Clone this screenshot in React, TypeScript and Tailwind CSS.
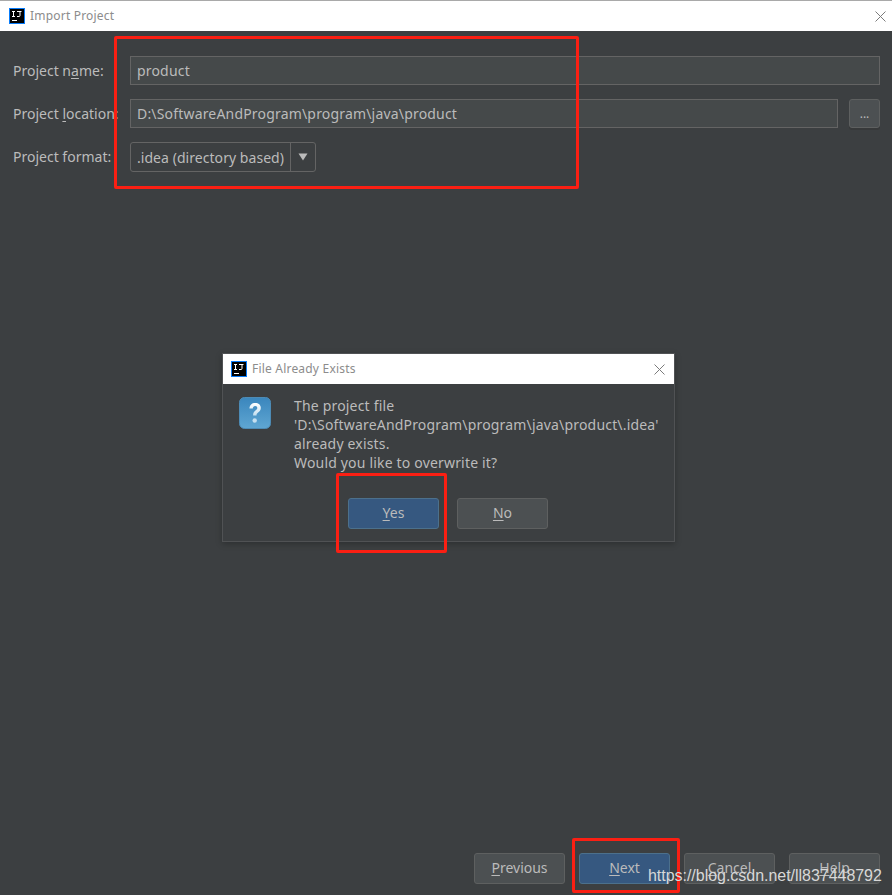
import React from 'react';

const uiFont = "font-['Noto_Sans','Open_Sans',sans-serif]";

const IdeaLogo = ({ size = 16 }: { size?: number }) => (
  <svg width={size} height={size} viewBox="0 0 16 16" className="shrink-0">
    <rect x="0" y="0" width="16" height="16" fill="#087cfa" />
    <rect x="1" y="1" width="14" height="14" fill="#000" />
    <path d="M3 3.500h3M4.500 3.500v5M3 8.500h3M8 3.500h4.500M11 3.500v4q0 1-1 1H8M3 12.500h5" stroke="#fff" strokeWidth="1" fill="none" />
  </svg>
);

const CloseIcon = () => (
  <svg width="11" height="11" viewBox="0 0 11 11" className="shrink-0">
    <path d="M0.500 0.500l10 10M10.500 0.500l-10 10" stroke="#7b7b7b" strokeWidth="1" />
  </svg>
);

const QuestionIcon = () => (
  <svg width="32" height="32" viewBox="0 0 32 32" className="shrink-0">
    <defs>
      <linearGradient id="qbg" x1="0" y1="0" x2="0" y2="1">
        <stop offset="0" stopColor="#3a86bd" />
        <stop offset="1" stopColor="#5fa6d2" />
      </linearGradient>
      <linearGradient id="qmark" x1="0" y1="0" x2="0" y2="1">
        <stop offset="0" stopColor="#ffffff" />
        <stop offset="1" stopColor="#c4dff0" />
      </linearGradient>
    </defs>
    <rect x="0.500" y="0.500" width="31" height="31" rx="5" fill="url(#qbg)" stroke="#4d8bb5" />
    <path d="M10.500 11.500c0-3.500 2.500-5.500 5.700-5.500 3.300 0 5.600 2 5.600 4.900 0 2.300-1.300 3.400-2.700 4.500-1.100.9-1.600 1.500-1.600 3.100h-3.400c0-2.600.8-3.700 2.300-4.900 1.100-.9 1.900-1.500 1.900-2.600 0-1.100-.8-1.900-2.100-1.900-1.400 0-2.300.9-2.400 2.400z" fill="url(#qmark)" />
    <circle cx="15.700" cy="23.500" r="2.200" fill="#c4dff0" />
  </svg>
);

const TitleBar = ({ title, className }: { title: string; className: string }) => (
  <div className={`bg-white flex items-center justify-between ${className}`}>
    <div className="flex items-center gap-[5px]">
      <IdeaLogo />
      <span className="text-[12px] tracking-[0.2px] text-[#8c8c8c]">{title}</span>
    </div>
    <CloseIcon />
  </div>
);

const Btn = ({ label, mnemonic, primary }: { label: string; mnemonic: string; primary?: boolean }) => (
  <button
    className={`w-[91px] h-[31px] rounded-[3px] border text-[14px] flex items-center justify-center pb-[2px] ${
      primary ? 'bg-[#365880] border-[#4c708c] text-[#bbbbbb]' : 'bg-[#4c5052] border-[#5e6060] text-[#bbbbbb]'
    }`}
  >
    <span>
      <span className="underline underline-offset-2">{mnemonic}</span>
      {label}
    </span>
  </button>
);

const Field = ({ value }: { value: string }) => (
  <div className="h-[29px] flex-1 bg-[#45494a] border border-[#646464] px-[6px] flex items-center text-[14px] tracking-[0.18px] text-[#bbbbbb]">
    {value}
  </div>
);

const Label = ({ children }: { children: React.ReactNode }) => (
  <div className="w-[117px] shrink-0 text-[14px] text-[#bbbbbb] whitespace-nowrap">{children}</div>
);

export default function App() {
  return (
    <div className={`relative w-[892px] h-[895px] overflow-hidden bg-[#3c3f41] flex flex-col ${uiFont}`}>
      <div className="h-px bg-[#a9a9a9]" />
      <TitleBar title="Import Project" className="h-[30px] pl-[9px] pr-[6px]" />

      <div className="flex-1 flex flex-col pl-[13px] pr-[12px] pt-[25px]">
        <div className="flex items-center">
          <Label>
            Project n<span className="underline underline-offset-2">a</span>me:
          </Label>
          <Field value="product" />
        </div>
        <div className="flex items-center mt-[14px]">
          <Label>
            Project <span className="underline underline-offset-2">l</span>ocation:
          </Label>
          <Field value={'D:\\SoftwareAndProgram\\program\\java\\product'} />
          <button className="ml-[11px] w-[31px] h-[29px] bg-[#4c5052] border border-[#5e6060] rounded-[3px] text-[12px] leading-none text-[#bbbbbb] shadow-[0_2px_0_#37393a]">
            ...
          </button>
        </div>
        <div className="flex items-center mt-[14px]">
          <div className="w-[117px] shrink-0 text-[14px] text-[#bbbbbb] whitespace-nowrap pb-[2px]">Project format:</div>
          <div className="h-[30px] w-[186px] flex bg-[#3c3f41] border border-[#646464] rounded-[3px] text-[14px] tracking-[0.05px] text-[#bbbbbb]">
            <div className="w-[160px] pl-[6px] flex items-center whitespace-nowrap border-r border-[#646464]">.idea (directory based)</div>
            <div className="flex-1 flex items-center justify-center">
              <svg width="10" height="8" viewBox="0 0 10 8">
                <path d="M0.500 0.500h9L5 7.500z" fill="#bbbbbb" />
              </svg>
            </div>
          </div>
        </div>

        <div className="mt-auto mb-[11px] flex justify-end gap-[14px]">
          <Btn mnemonic="P" label="revious" />
          <Btn mnemonic="N" label="ext" primary />
          <Btn mnemonic="C" label="ancel" />
          <Btn mnemonic="H" label="elp" />
        </div>
      </div>

      {/* dialog */}
      <div className="absolute left-[222px] top-[353px] w-[453px] h-[189px] bg-[#3c3f41] border border-[#505254] shadow-[0_2px_6px_rgba(0,0,0,0.25)] flex flex-col">
        <TitleBar title="File Already Exists" className="h-[30px] pl-[8px] pr-[9px]" />
        <div className="flex pl-[16px] pt-[12px]">
          <div className="mt-[1px]">
            <QuestionIcon />
          </div>
          <div className="ml-[23px] text-[14px] leading-[19px] tracking-[0.18px] text-[#bbbbbb] whitespace-nowrap">
            <div>The project file</div>
            <div>{"'D:\\SoftwareAndProgram\\program\\java\\product\\.idea'"}</div>
            <div>already exists.</div>
            <div>Would you like to overwrite it?</div>
          </div>
        </div>
        <div className="flex pl-[125px] gap-[18px] mt-[26px]">
          <Btn mnemonic="Y" label="es" primary />
          <Btn mnemonic="N" label="o" />
        </div>
      </div>

      {/* red annotation boxes */}
      <div className="absolute left-[114px] top-[36px] w-[465px] h-[153px] border-[3px] border-[#fb1f13] rounded-[2px]" />
      <div className="absolute left-[336px] top-[473px] w-[111px] h-[80px] border-[3px] border-[#fb1f13] rounded-[2px]" />
      <div className="absolute left-[572px] top-[838px] w-[108px] h-[55px] border-[3px] border-[#fb1f13] rounded-[2px]" />

      {/* watermark */}
      <div className="absolute left-[648px] top-[867px] font-['Liberation_Sans',sans-serif] text-[16px] leading-[18px] tracking-[-0.03px] text-[#d8d8d8] whitespace-nowrap">
        https://blog.csdn.net/ll837448792
      </div>
    </div>
  );
}
